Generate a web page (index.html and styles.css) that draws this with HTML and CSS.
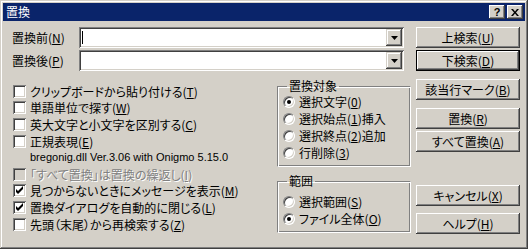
FILE: index.html
```html
<!DOCTYPE html>
<html lang="ja">
<head>
  <meta charset="UTF-8" />
  <title>置換</title>
  <link rel="stylesheet" href="styles.css">
</head>
<body>
  <div class="window">
    <div class="titlebar">
      <span class="title">置換</span>
      <div class="cap-btns">
        <span class="cap-btn help">?</span>
        <span class="cap-btn close">
          <svg width="8" height="7" viewBox="0 0 8 7"><path d="M0 0h2l2 2.5L6 0h2L5 3.5 8 7H6L4 4.5 2 7H0l3-3.5z" fill="#000"/></svg>
        </span>
      </div>
    </div>

    <div class="body">
      <div class="main">
        <div class="field">
          <label>置換前(<u>N</u>)</label>
          <div class="combo">
            <div class="combo-text"><span class="caret"></span></div>
            <span class="drop"><svg width="7" height="4" viewBox="0 0 7 4"><path d="M0 0h7L3.5 4z" fill="#000"/></svg></span>
          </div>
        </div>
        <div class="field">
          <label>置換後(<u>P</u>)</label>
          <div class="combo">
            <div class="combo-text"></div>
            <span class="drop"><svg width="7" height="4" viewBox="0 0 7 4"><path d="M0 0h7L3.5 4z" fill="#000"/></svg></span>
          </div>
        </div>

        <div class="lower">
          <div class="checks">
            <div class="check"><span class="box"></span><span>クリップボードから貼り付ける(<u>T</u>)</span></div>
            <div class="check"><span class="box"></span><span>単語単位で探す(<u>W</u>)</span></div>
            <div class="check"><span class="box"></span><span>英大文字と小文字を区別する(<u>C</u>)</span></div>
            <div class="check"><span class="box"></span><span>正規表現(<u>E</u>)</span></div>
            <div class="note">bregonig.dll Ver.3.06 with Onigmo 5.15.0</div>
            <div class="check disabled"><span class="box"></span><span>「すべて置換」は置換の繰返し(<u>I</u>)</span></div>
            <div class="check"><span class="box checked"><svg width="13" height="13" viewBox="0 0 13 13"><path d="M3 5v3l2 2 5-5V2L5 7z" fill="#000"/></svg></span><span>見つからないときにメッセージを表示(<u>M</u>)</span></div>
            <div class="check"><span class="box checked"><svg width="13" height="13" viewBox="0 0 13 13"><path d="M3 5v3l2 2 5-5V2L5 7z" fill="#000"/></svg></span><span>置換ダイアログを自動的に閉じる(<u>L</u>)</span></div>
            <div class="check"><span class="box"></span><span>先頭（末尾）から再検索する(<u>Z</u>)</span></div>
          </div>

          <div class="groups">
            <fieldset class="group target">
              <legend>置換対象</legend>
              <div class="radio"><span class="rb on"></span><span>選択文字(<u>0</u>)</span></div>
              <div class="radio"><span class="rb"></span><span>選択始点(<u>1</u>)挿入</span></div>
              <div class="radio"><span class="rb"></span><span>選択終点(<u>2</u>)追加</span></div>
              <div class="radio"><span class="rb"></span><span>行削除(<u>3</u>)</span></div>
            </fieldset>
            <fieldset class="group range">
              <legend>範囲</legend>
              <div class="radio"><span class="rb"></span><span>選択範囲(<u>S</u>)</span></div>
              <div class="radio"><span class="rb on"></span><span>ファイル全体(<u>O</u>)</span></div>
            </fieldset>
          </div>
        </div>
      </div>

      <div class="buttons">
        <div class="btn">上検索(<u>U</u>)</div>
        <div class="btn default">下検索(<u>D</u>)</div>
        <div class="btn mark">該当行マーク(<u>B</u>)</div>
        <div class="btn replace">置換(<u>R</u>)</div>
        <div class="btn">すべて置換(<u>A</u>)</div>
        <div class="btn cancel">キャンセル(<u>X</u>)</div>
        <div class="btn helpbtn">ヘルプ(<u>H</u>)</div>
      </div>
    </div>
  </div>
</body>
</html>
```

FILE: styles.css
```css
* {
  box-sizing: border-box;
}
html, body {
  margin: 0;
  padding: 0;
}
body {
  width: 528px;
  height: 249px;
  background: #d4d0c8;
  font-family: "Noto Sans CJK JP", "Noto Sans", sans-serif;
  font-size: 12px;
  font-feature-settings: "palt";
  color: #000;
}
u {
  text-decoration-thickness: 1px;
  text-underline-offset: 1px;
}
.window {
  width: 528px;
  height: 249px;
  padding: 3px;
  display: flex;
  flex-direction: column;
  background: #d4d0c8;
  box-shadow: inset -1px -1px #404040, inset 1px 1px #d4d0c8,
              inset -2px -2px #808080, inset 2px 2px #fff;
}
.titlebar {
  height: 18px;
  flex: none;
  background: #0a246a;
  color: #fff;
  display: flex;
  align-items: center;
  justify-content: space-between;
  padding: 0 2px 0 3px;
  line-height: 18px;
}
.cap-btns {
  display: flex;
  gap: 2px;
}
.cap-btn {
  width: 16px;
  height: 14px;
  background: #d4d0c8;
  color: #000;
  display: flex;
  align-items: center;
  justify-content: center;
  box-shadow: inset -1px -1px #404040, inset 1px 1px #fff,
              inset -2px -2px #808080, inset 2px 2px #d4d0c8;
}
.cap-btn.help {
  font-family: "Liberation Sans", sans-serif;
  font-weight: bold;
  font-size: 11px;
  line-height: 14px;
}
.body {
  flex: 1;
  display: flex;
  gap: 5px;
  padding: 6px 5px 0 9px;
}
.main {
  flex: 1;
  display: flex;
  flex-direction: column;
}
.field {
  display: flex;
  align-items: center;
  height: 21px;
  margin-bottom: 2px;
}
.field label {
  width: 67px;
}
.combo {
  width: 325px;
  height: 21px;
  padding: 2px;
  display: flex;
  background: #fff;
  box-shadow: inset 1px 1px #808080, inset -1px -1px #fff,
              inset 2px 2px #404040, inset -2px -2px #d4d0c8;
}
.combo-text {
  flex: 1;
  display: flex;
  align-items: center;
  padding-left: 1px;
}
.caret {
  width: 1px;
  height: 13px;
  background: #000;
}
.drop {
  width: 16px;
  height: 17px;
  background: #d4d0c8;
  display: flex;
  align-items: center;
  justify-content: center;
  box-shadow: inset -1px -1px #404040, inset 1px 1px #d4d0c8,
              inset -2px -2px #808080, inset 2px 2px #fff;
}
.lower {
  display: flex;
  margin-top: 6px;
}
.checks {
  flex: 1;
  padding: 4px 0 0 1px;
}
.check {
  display: flex;
  align-items: center;
  gap: 4px;
  height: 16.6px;
  white-space: nowrap;
}
.box {
  width: 13px;
  height: 13px;
  flex: none;
  background: #fff;
  box-shadow: inset 1px 1px #808080, inset -1px -1px #fff,
              inset 2px 2px #404040, inset -2px -2px #d4d0c8;
}
.box svg {
  display: block;
}
.check.disabled {
  color: #808080;
  text-shadow: 1px 1px #fff;
}
.check.disabled .box {
  background: #d4d0c8;
}
.note {
  height: 16.6px;
  line-height: 16.6px;
  padding-left: 17px;
  font-family: "Liberation Sans", sans-serif;
  font-size: 11px;
  white-space: nowrap;
}
.groups {
  width: 134px;
  flex: none;
}
.group {
  margin: 0;
  padding: 0 0 5px 5px;
  border: 1px solid;
  border-color: #808080 #fff #fff #808080;
  box-shadow: inset 1px 1px #fff, inset -1px -1px #808080;
}
.group legend {
  margin-left: 4px;
  padding: 0 2px;
  line-height: 14px;
}
.group.range {
  margin-top: 7px;
  padding-top: 5px;
}
.radio {
  display: flex;
  align-items: center;
  gap: 4px;
  height: 17px;
  white-space: nowrap;
}
.rb {
  width: 12px;
  height: 12px;
  flex: none;
  border-radius: 50%;
  background: #fff;
  border: 1px solid;
  border-color: #808080 #fff #fff #808080;
  box-shadow: inset 1px 1px #404040, inset -1px -1px #d4d0c8;
  display: flex;
  align-items: center;
  justify-content: center;
}
.rb.on::after {
  content: "";
  width: 4px;
  height: 4px;
  border-radius: 50%;
  background: #000;
}
.buttons {
  width: 104px;
  flex: none;
  display: flex;
  flex-direction: column;
}
.btn {
  height: 21px;
  margin-top: 2px;
  display: flex;
  align-items: center;
  justify-content: center;
  background: #d4d0c8;
  white-space: nowrap;
  box-shadow: inset -1px -1px #404040, inset 1px 1px #fff,
              inset -2px -2px #808080, inset 2px 2px #d4d0c8;
}
.btn:first-child {
  margin-top: 0;
}
.btn.default {
  border: 1px solid #000;
}
.btn.mark {
  margin-top: 8px;
}
.btn.replace {
  margin-top: 8px;
}
.btn.cancel {
  margin-top: 33px;
}
.btn.helpbtn {
  margin-top: 7px;
}
```
